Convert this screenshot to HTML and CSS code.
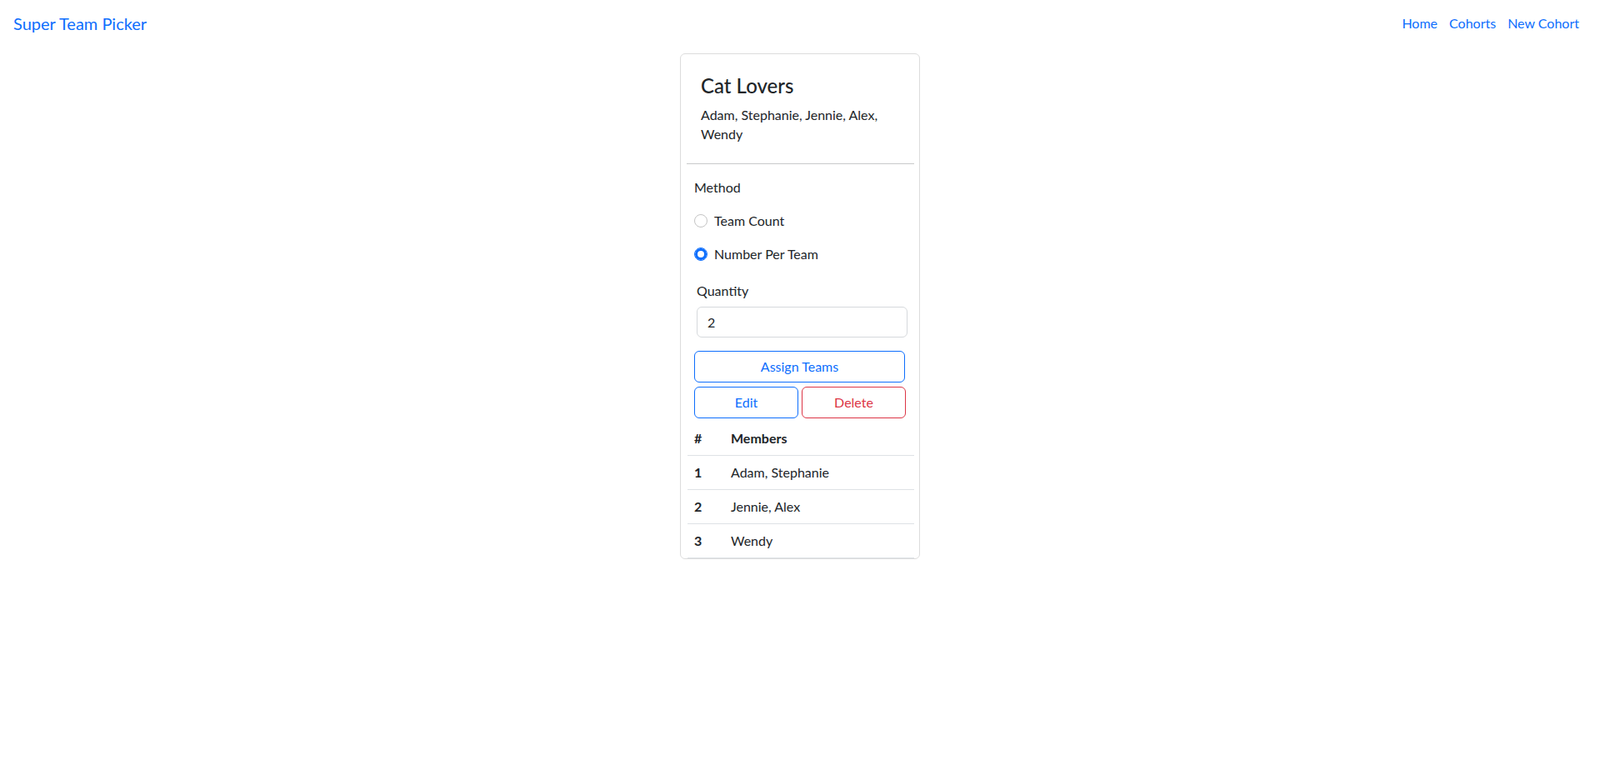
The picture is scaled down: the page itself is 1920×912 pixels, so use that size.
FILE: index.html
```html
<!DOCTYPE html>
<html lang="en">
<head>
<meta charset="utf-8">
<title>Super Team Picker</title>
<link rel="stylesheet" href="styles.css">
</head>
<body>
<nav class="navbar">
  <a class="brand" href="#">Super Team Picker</a>
  <div class="nav-links">
    <a href="#">Home</a>
    <a href="#">Cohorts</a>
    <a href="#">New Cohort</a>
  </div>
</nav>
<main class="page">
  <div class="card">
    <div class="card-inner">
      <div class="card-head">
        <h4 class="card-title">Cat Lovers</h4>
        <p class="card-text">Adam, Stephanie, Jennie, Alex, Wendy</p>
      </div>
      <hr class="divider">
      <form class="team-form">
        <div class="form-label">Method</div>
        <label class="check">
          <input type="radio" name="method" class="radio">
          <span>Team Count</span>
        </label>
        <label class="check">
          <input type="radio" name="method" class="radio" checked>
          <span>Number Per Team</span>
        </label>
        <div class="qty">
          <label class="qty-label" for="qty">Quantity</label>
          <input id="qty" class="input" type="text" value="2">
        </div>
        <button type="button" class="btn btn-blue btn-full">Assign Teams</button>
        <div class="btn-row">
          <button type="button" class="btn btn-blue">Edit</button>
          <button type="button" class="btn btn-red">Delete</button>
        </div>
      </form>
      <table class="teams">
        <thead>
          <tr><th class="num">#</th><th>Members</th></tr>
        </thead>
        <tbody>
          <tr><th class="num">1</th><td>Adam, Stephanie</td></tr>
          <tr><th class="num">2</th><td>Jennie, Alex</td></tr>
          <tr><th class="num">3</th><td>Wendy</td></tr>
        </tbody>
      </table>
    </div>
  </div>
</main>
</body>
</html>
```

FILE: styles.css
```css
* { box-sizing: border-box; }
html, body { margin: 0; padding: 0; }
body {
  font-family: Lato, "Noto Sans", sans-serif;
  font-size: 16px;
  line-height: 24px;
  color: #212529;
  background: #fff;
}
a { color: #0d6efd; text-decoration: none; }

.navbar {
  height: 56px;
  display: flex;
  align-items: center;
  justify-content: space-between;
  padding: 0 25px 0 16px;
}
.brand { font-size: 20px; line-height: 30px; }
.nav-links { display: flex; gap: 14px; }

.page { padding-top: 8px; }
.card {
  width: 288px;
  margin: 0 auto;
  border: 1px solid #dcdcdc;
  border-radius: 6px;
  background: #fff;
}
.card-inner { padding: 8px 6px 0 8px; }
.card-head { padding: 16px 16px 18px 16px; }
.card-title {
  margin: 0 0 8px;
  font-size: 24px;
  line-height: 28.8px;
  font-weight: 500;
}
.card-text { margin: 0; line-height: 23px; }
.divider {
  margin: 6px 0 0 -1px;
  border: 0;
  border-top: 1px solid #c8c9ca;
  height: 0;
}

.team-form { padding: 16px 0 0 8px; }
.form-label { margin-bottom: 16px; }
.check {
  display: flex;
  align-items: center;
  gap: 8px;
  margin-bottom: 16px;
}
.radio {
  appearance: none;
  -webkit-appearance: none;
  margin: 0;
  width: 16px;
  height: 16px;
  border-radius: 50%;
  border: 1px solid #c4c4c4;
  background: #fff;
}
.radio:checked {
  border-color: #0d6efd;
  box-shadow: inset 0 0 0 3px #0d6efd;
}
.qty { padding: 4px 0 0 3px; }
.qty-label { display: block; margin-bottom: 7px; }
.input {
  display: block;
  width: 253px;
  height: 37px;
  padding: 6px 12px;
  border: 1px solid #d6d9dc;
  border-radius: 6px;
  font: inherit;
  color: #212529;
}
.btn {
  display: block;
  height: 38px;
  border-radius: 6px;
  background: #fff;
  font: inherit;
  padding: 0;
  cursor: pointer;
}
.btn-blue { border: 1px solid #0d6efd; color: #0d6efd; }
.btn-red { border: 1px solid #dc3545; color: #dc3545; }
.btn-full { width: 253px; margin-top: 16px; }
.btn-row {
  display: grid;
  grid-template-columns: 125px 125px;
  gap: 4px;
  margin-top: 5px;
  width: 254px;
}

.teams {
  width: 272px;
  border-collapse: collapse;
  margin-top: 4px;
}
.teams th, .teams td {
  text-align: left;
  padding: 8px;
  border-bottom: 1px solid #dee2e6;
  line-height: 24px;
}
.teams th { font-weight: 700; }
.teams .num { width: 44px; }
```
